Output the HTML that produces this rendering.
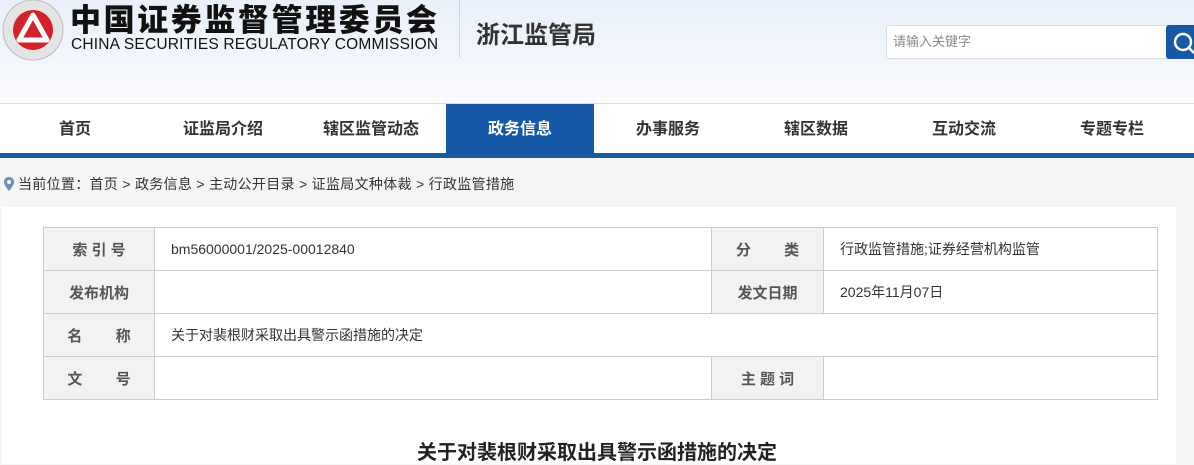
<!DOCTYPE html>
<html><head><meta charset="utf-8"><style>
*{margin:0;padding:0;box-sizing:border-box}
body{width:1194px;height:464px;overflow:hidden;background:#f5f5f5;font-family:"Liberation Sans","Noto Sans CJK SC",sans-serif;color:#333;position:relative}
.hdr{position:absolute;left:0;top:0;width:1194px;height:103px;background:linear-gradient(#e9f0f9,#f7f9fd 85%,#fbfcfe)}
.abs{position:absolute}
.nav{position:absolute;left:0;top:103px;width:1194px;height:50px;background:#fff;border-top:1px solid #ddd}
.nav div{position:absolute;top:0;height:50px;width:148px;text-align:center;line-height:52px;font-size:16px;font-weight:bold;color:#333}
.nav .on{background:#1559a8;color:#fff}
.bar{position:absolute;left:0;top:153px;width:1194px;height:5px;background:#1a5aa0}
.crumb{position:absolute;left:0;top:165px;width:1194px;height:42px;line-height:38px;font-size:14px;color:#333;padding-left:18px;letter-spacing:0.3px}
.main{position:absolute;left:2px;top:207px;width:1174px;height:257px;background:#fff}
table{position:absolute;left:43px;top:227px;border-collapse:collapse;font-size:14px;width:1115px}
td{border:1px solid #ccc;height:43px;padding:0 16px;color:#333}
td.l{background:#f2f2f2;text-align:center;font-weight:bold;color:#555;font-size:15px;padding:0}
</style></head><body>
<div class="hdr"></div>
<svg class="abs" style="left:1px;top:0" width="64" height="62" viewBox="0 0 64 62">
<circle cx="32" cy="30" r="30" fill="#e4e4e4" stroke="#bbb"/>
<circle cx="32" cy="30" r="20" fill="#d3222a"/>
<path d="M32 15 L46 40 L18 40 Z" fill="none" stroke="#fff" stroke-width="5" stroke-linejoin="round"/>
<path d="M32 24 L39 36 L25 36 Z" fill="#d3222a"/>
</svg>
<div class="abs" style="left:70px;top:5px;font-size:31px;line-height:31px;font-weight:900;color:#111;letter-spacing:2.6px;white-space:nowrap">中国证券监督管理委员会</div>
<div class="abs" style="left:71px;top:37px;font-size:15.5px;line-height:16px;color:#111;white-space:nowrap;letter-spacing:0.2px">CHINA SECURITIES REGULATORY COMMISSION</div>
<div class="abs" style="left:459px;top:0;width:1px;height:58px;background:#cfd6df"></div>
<div class="abs" style="left:476px;top:15px;font-size:24px;font-weight:bold;color:#333">浙江监管局</div>
<div class="abs" style="left:886px;top:25px;width:282px;height:34px;background:#fff;border:1px solid #d8dde3;border-radius:3px 0 0 3px;font-size:13px;color:#888;line-height:32px;padding-left:6px">请输入关键字</div>
<div class="abs" style="left:1166px;top:25px;width:28px;height:34px;background:#1559a8;border-radius:3px 0 0 3px"></div>
<svg class="abs" style="left:1172px;top:31px" width="22" height="24"><circle cx="11" cy="11" r="8" fill="none" stroke="#fff" stroke-width="2.5"/><path d="M17 17 L22 22" stroke="#fff" stroke-width="2.5"/></svg>
<div class="nav">
<div style="left:1px">首页</div><div style="left:149px">证监局介绍</div><div style="left:297px">辖区监管动态</div><div class="on" style="left:446px">政务信息</div><div style="left:594px">办事服务</div><div style="left:742px">辖区数据</div><div style="left:890px">互动交流</div><div style="left:1038px">专题专栏</div>
</div>
<div class="bar"></div>
<div class="crumb">当前位置：首页 &gt; 政务信息 &gt; 主动公开目录 &gt; 证监局文种体裁 &gt; 行政监管措施</div>
<svg class="abs" style="left:3px;top:176px" width="12" height="16"><path d="M6 1 C2.5 1 1 3.5 1 6 C1 9.5 6 15 6 15 C6 15 11 9.5 11 6 C11 3.5 9.5 1 6 1Z" fill="#6b8fb8"/><circle cx="6" cy="6" r="2" fill="#fff"/></svg>
<div class="main"></div>
<table>
<tr><td class="l" style="width:111px">索 引 号</td><td style="width:557px">bm56000001/2025-00012840</td><td class="l" style="width:112px">分&nbsp;&nbsp;&nbsp;&nbsp;&nbsp;&nbsp;&nbsp;&nbsp;类</td><td>行政监管措施;证券经营机构监管</td></tr>
<tr><td class="l">发布机构</td><td></td><td class="l">发文日期</td><td>2025年11月07日</td></tr>
<tr><td class="l">名&nbsp;&nbsp;&nbsp;&nbsp;&nbsp;&nbsp;&nbsp;&nbsp;称</td><td colspan="3">关于对裴根财采取出具警示函措施的决定</td></tr>
<tr><td class="l">文&nbsp;&nbsp;&nbsp;&nbsp;&nbsp;&nbsp;&nbsp;&nbsp;号</td><td></td><td class="l">主 题 词</td><td></td></tr>
</table>
<div class="abs" style="left:0;width:1194px;top:436px;text-align:center;font-size:20px;font-weight:bold;color:#222">关于对裴根财采取出具警示函措施的决定</div>
</body></html>
